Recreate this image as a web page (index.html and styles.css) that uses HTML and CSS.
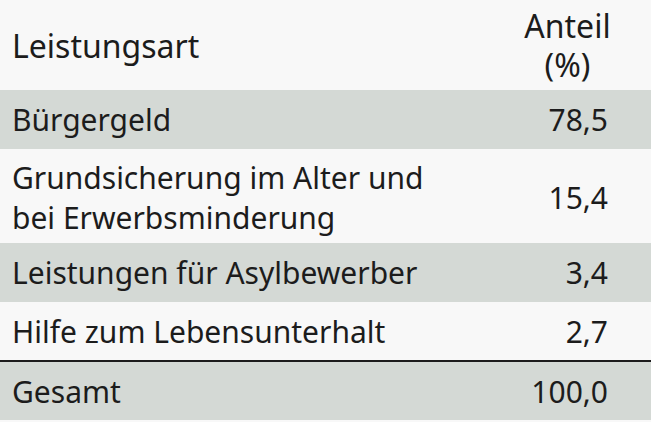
FILE: index.html
```html
<!DOCTYPE html>
<html lang="de">
<head>
<meta charset="utf-8">
<link rel="stylesheet" href="styles.css">
</head>
<body>
<table class="tbl">
  <colgroup><col class="c-name"><col class="c-val"></colgroup>
  <thead>
    <tr class="head">
      <th class="name">Leistungsart</th>
      <th class="val">Anteil<br>(%)</th>
    </tr>
  </thead>
  <tbody>
    <tr class="row shade"><td class="name">Bürgergeld</td><td class="num">78,5</td></tr>
    <tr class="row tall"><td class="name">Grundsicherung im Alter und<br>bei Erwerbsminderung</td><td class="num">15,4</td></tr>
    <tr class="row shade"><td class="name">Leistungen für Asylbewerber</td><td class="num">3,4</td></tr>
    <tr class="row"><td class="name">Hilfe zum Lebensunterhalt</td><td class="num">2,7</td></tr>
  </tbody>
  <tfoot>
    <tr class="row shade total"><td class="name">Gesamt</td><td class="num">100,0</td></tr>
  </tfoot>
</table>
</body>
</html>
```
FILE: styles.css
```css
html, body {
  margin: 0;
  padding: 0;
  background: #f8f8f8;
}
.tbl {
  width: 651px;
  border-collapse: collapse;
  table-layout: fixed;
  font-family: "Noto Sans", "Open Sans", sans-serif;
  font-size: 30px;
  line-height: 40px;
  color: #1c1c1c;
}
.c-val { width: 160px; }
.tbl th, .tbl td {
  padding: 1px 0 0 0;
  vertical-align: middle;
  font-weight: normal;
}
.tbl .head { height: 90px; font-size: 32px; }
.tbl .head .name { text-align: left; padding-left: 12px; padding-top: 2px; }
.tbl .head .val { text-align: center; padding-right: 7px; padding-top: 0; line-height: 39px; }
.tbl .row { height: 59px; }
.tbl .row.tall { height: 94px; }
.tbl .row.tall td { padding-top: 3px; }
.tbl .shade { background: #d4d9d5; }
.tbl .name { padding-left: 12px; }
.tbl .num { text-align: right; padding-right: 43px; }
.tbl .total td { border-top: 2px solid #1c1c1c; }
```
